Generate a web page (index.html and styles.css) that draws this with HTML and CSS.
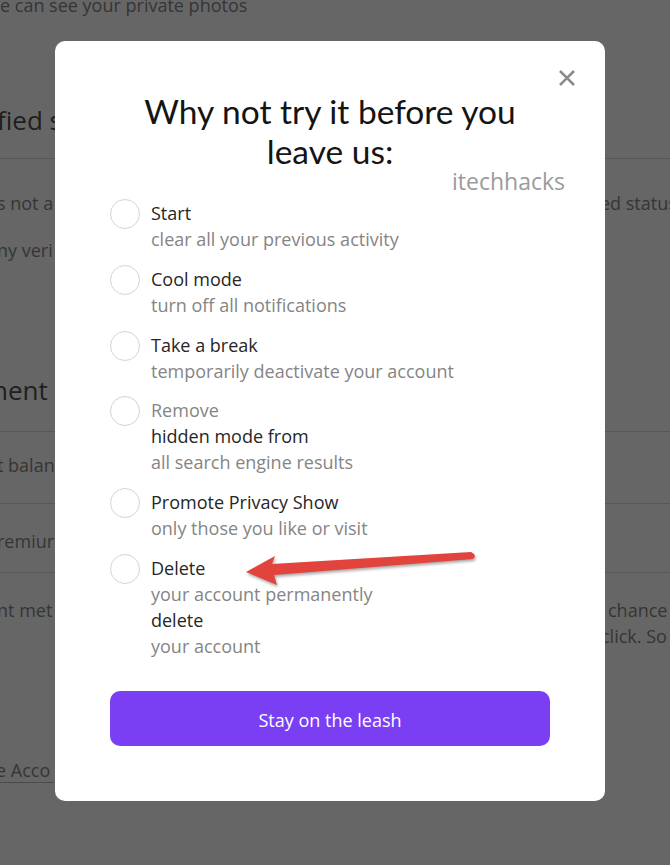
FILE: index.html
```html
<!DOCTYPE html>
<html>
<head>
<meta charset="utf-8">
<link rel="stylesheet" href="styles.css">
</head>
<body>
<div class="page">
  <p class="bg-text top">e can see your private photos</p>
  <h2 class="bg-head first">fied s</h2>
  <hr class="rule">
  <div class="bg-row r1"><span>s not a</span><span>ed status</span></div>
  <div class="bg-row r2"><span>ny veri</span></div>
  <h2 class="bg-head second">nent</h2>
  <hr class="rule r-a">
  <div class="bg-row r3"><span>t balan</span></div>
  <hr class="rule r-b">
  <div class="bg-row r4"><span>remiur</span></div>
  <hr class="rule r-c">
  <div class="bg-row r5"><span>nt met</span><span>chance</span></div>
  <div class="bg-row r6"><span></span><span>click. So</span></div>
  <div class="bg-link"><span>e Acco</span></div>
</div>

<div class="modal">
  <svg class="close" viewBox="0 0 18 18" width="18" height="18"><path d="M2 2 L16 16 M16 2 L2 16" stroke="#8a8a8a" stroke-width="2.6" stroke-linecap="butt"/></svg>
  <h1 class="title">Why not try it before you leave us:</h1>
  <div class="watermark">itechhacks</div>
  <div class="options">
    <div class="opt"><span class="radio"></span><div class="lines"><div class="t">Start</div><div class="s">clear all your previous activity</div></div></div>
    <div class="opt"><span class="radio"></span><div class="lines"><div class="t">Cool mode</div><div class="s">turn off all notifications</div></div></div>
    <div class="opt"><span class="radio"></span><div class="lines"><div class="t">Take a break</div><div class="s">temporarily deactivate your account</div></div></div>
    <div class="opt"><span class="radio"></span><div class="lines"><div class="s">Remove</div><div class="t">hidden mode from</div><div class="s">all search engine results</div></div></div>
    <div class="opt"><span class="radio"></span><div class="lines"><div class="t">Promote Privacy Show</div><div class="s">only those you like or visit</div></div></div>
    <div class="opt"><span class="radio"></span><div class="lines"><div class="t">Delete</div><div class="s">your account permanently</div><div class="t">delete</div><div class="s">your account</div></div></div>
  </div>
  <button class="stay">Stay on the leash</button>
</div>

<svg class="arrow" viewBox="0 0 240 45" width="240" height="45">
  <polygon points="6,27 35,11 32,19 231,7 234,9 235,11.5 233,14 34,30 37,40" fill="#e2433c"/>
</svg>
</body>
</html>
```
FILE: styles.css
```css
html, body {
  margin: 0;
  padding: 0;
  width: 670px;
  height: 865px;
  overflow: hidden;
  background: #666666;
  font-family: "Open Sans", "Liberation Sans", sans-serif;
}

.page {
  color: #353535;
  font-size: 18px;
}

.bg-text {
  margin: -7px 0 0 0;
  line-height: 24px;
  white-space: nowrap;
}

.bg-head {
  margin: 0;
  font-weight: 400;
  font-size: 26px;
  line-height: 34px;
  color: #1f1f1f;
  white-space: nowrap;
}
.bg-head.first { margin-top: 86px; margin-left: -3px; }
.bg-head.second { margin-top: 110px; margin-left: -8px; }

.rule {
  margin: 21px 0 0 0;
  border: 0;
  height: 1px;
  background: #575757;
}
.rule.r-a { margin-top: 24px; }
.rule.r-b { margin-top: 25px; }
.rule.r-c { margin-top: 18px; }

.bg-row {
  display: grid;
  grid-template-columns: 600px 1fr;
  line-height: 26px;
  white-space: nowrap;
  overflow: hidden;
}
.bg-row span:first-child { margin-left: -3px; }
.bg-row.r1 { margin-top: 31px; }
.bg-row.r2 { margin-top: 21px; }
.bg-row.r3 { margin-top: 20px; }
.bg-row.r4 { margin-top: 24px; }
.bg-row.r5 { margin-top: 24px; }
.bg-row.r5 span:last-child { margin-left: 8px; }
.bg-row.r6 { margin-top: 0; }
.bg-row.r6 span:last-child { margin-left: 1px; }

.bg-link {
  margin-top: 109px;
  line-height: 24px;
  white-space: nowrap;
}
.bg-link span {
  display: inline-block;
  margin-left: -4px;
  padding-right: 4px;
  border-bottom: 1px solid #4a4a4a;
}

.modal {
  position: fixed;
  left: 55px;
  top: 41px;
  width: 550px;
  height: 760px;
  box-sizing: border-box;
  padding: 50px 55px 55px;
  background: #ffffff;
  border-radius: 10px;
}

.close {
  position: absolute;
  left: 503px;
  top: 28px;
}

.title {
  margin: 0 -20px;
  font-family: "Lato", "Noto Sans", sans-serif;
  font-weight: 400;
  font-size: 33.5px;
  line-height: 40px;
  text-align: center;
  color: #141414;
  padding: 0 40px;
}

.watermark {
  text-align: right;
  margin-right: -15px;
  font-size: 23px;
  line-height: 20px;
  color: #9b9b9b;
}

.options {
  margin-top: 9px;
  display: flex;
  flex-direction: column;
  gap: 13.8px;
}

.opt {
  display: flex;
  gap: 11px;
  align-items: flex-start;
}

.radio {
  flex: none;
  width: 30px;
  height: 30px;
  box-sizing: border-box;
  border: 1px solid #d4d4d4;
  border-radius: 50%;
  margin-top: -1px;
}

.lines {
  font-size: 18px;
  line-height: 26px;
}
.t { color: #262626; }
.s { color: #858585; }

.stay {
  display: block;
  width: 100%;
  height: 55px;
  margin-top: 32px;
  padding: 3px 0 0;
  border: 0;
  border-radius: 10px;
  background: #7a3ef3;
  color: #ffffff;
  font-family: "Open Sans", sans-serif;
  font-size: 18px;
  font-weight: 500;
}

.arrow {
  position: absolute;
  left: 240px;
  top: 545px;
  filter: drop-shadow(1px 2px 1.5px rgba(0,0,0,0.35));
}
```
